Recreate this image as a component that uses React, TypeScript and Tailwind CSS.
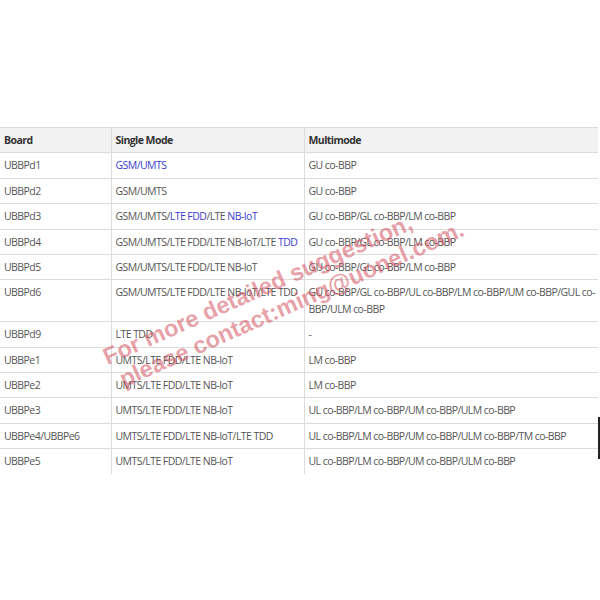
const blue = "text-[#3b3bd0]";

type Row = { board: string; single: React.ReactNode; multi: React.ReactNode };

const rows: Row[] = [
  { board: "UBBPd1", single: <span className={blue}>GSM/UMTS</span>, multi: "GU co-BBP" },
  { board: "UBBPd2", single: "GSM/UMTS", multi: "GU co-BBP" },
  {
    board: "UBBPd3",
    single: (
      <>
        GSM/UMTS/<span className={blue}>LTE FDD</span>/LTE <span className={blue}>NB-IoT</span>
      </>
    ),
    multi: "GU co-BBP/GL co-BBP/LM co-BBP",
  },
  {
    board: "UBBPd4",
    single: (
      <>
        GSM/UMTS/LTE FDD/LTE NB-IoT/LTE <span className={blue}>TDD</span>
      </>
    ),
    multi: "GU co-BBP/GL co-BBP/LM co-BBP",
  },
  { board: "UBBPd5", single: "GSM/UMTS/LTE FDD/LTE NB-IoT", multi: "GU co-BBP/GL co-BBP/LM co-BBP" },
  {
    board: "UBBPd6",
    single: "GSM/UMTS/LTE FDD/LTE NB-IoT/LTE TDD",
    multi: (
      <>
        GU co-BBP/GL co-BBP/UL co-BBP/LM co-BBP/UM co-BBP/GUL co-
        <br />
        BBP/ULM co-BBP
      </>
    ),
  },
  { board: "UBBPd9", single: "LTE TDD", multi: "-" },
  { board: "UBBPe1", single: "UMTS/LTE FDD/LTE NB-IoT", multi: "LM co-BBP" },
  { board: "UBBPe2", single: "UMTS/LTE FDD/LTE NB-IoT", multi: "LM co-BBP" },
  { board: "UBBPe3", single: "UMTS/LTE FDD/LTE NB-IoT", multi: "UL co-BBP/LM co-BBP/UM co-BBP/ULM co-BBP" },
  {
    board: "UBBPe4/UBBPe6",
    single: "UMTS/LTE FDD/LTE NB-IoT/LTE TDD",
    multi: "UL co-BBP/LM co-BBP/UM co-BBP/ULM co-BBP/TM co-BBP",
  },
  { board: "UBBPe5", single: "UMTS/LTE FDD/LTE NB-IoT", multi: "UL co-BBP/LM co-BBP/UM co-BBP/ULM co-BBP" },
];

const cell = "align-top px-[4px] py-[4px] leading-[16.4px] whitespace-nowrap";

export default function App() {
  return (
    <div
      className="relative w-[600px] h-[600px] overflow-hidden bg-white"
      style={{ fontFamily: '"Open Sans", "Noto Sans", sans-serif' }}
    >
      <table className="mt-[127px] w-[598px] table-fixed border-collapse text-[10.5px] tracking-[-0.55px] text-[#555]">
        <colgroup>
          <col className="w-[111px]" />
          <col className="w-[193px]" />
          <col />
        </colgroup>
        <thead>
          <tr className="bg-[#f2f2f2] text-[#333] font-bold">
            <th className={`${cell} text-left border-y border-[#dcdcdc]`}>Board</th>
            <th className={`${cell} text-left border border-[#dcdcdc]`}>Single Mode</th>
            <th className={`${cell} text-left border-y border-l border-[#dcdcdc]`}>Multimode</th>
          </tr>
        </thead>
        <tbody>
          {rows.map((r, i) => {
            const last = i === rows.length - 1;
            const bottom = last ? "" : "border-b";
            return (
              <tr key={r.board}>
                <td className={`${cell} ${bottom} border-[#dcdcdc]`}>{r.board}</td>
                <td className={`${cell} ${bottom} border-x border-[#dcdcdc]`}>{r.single}</td>
                <td className={`${cell} ${bottom} border-l border-[#dcdcdc]`}>{r.multi}</td>
              </tr>
            );
          })}
        </tbody>
      </table>

      {/* stray dark bar on the right edge */}
      <div className="absolute left-[598px] top-[417px] w-[2px] h-[42px] bg-[#222]" />

      {/* watermark */}
      <div
        className="pointer-events-none absolute left-[99px] top-[346px] origin-top-left -rotate-[24deg] font-bold text-[23.5px] leading-[27px] text-[#d2505e]/55 whitespace-nowrap"
        style={{ fontFamily: "Arial, 'Liberation Sans', sans-serif" }}
      >
        <div>For more detailed suggestion,</div>
        <div className="pl-[6px]">please contact:ming@uonel.com.</div>
      </div>
    </div>
  );
}
